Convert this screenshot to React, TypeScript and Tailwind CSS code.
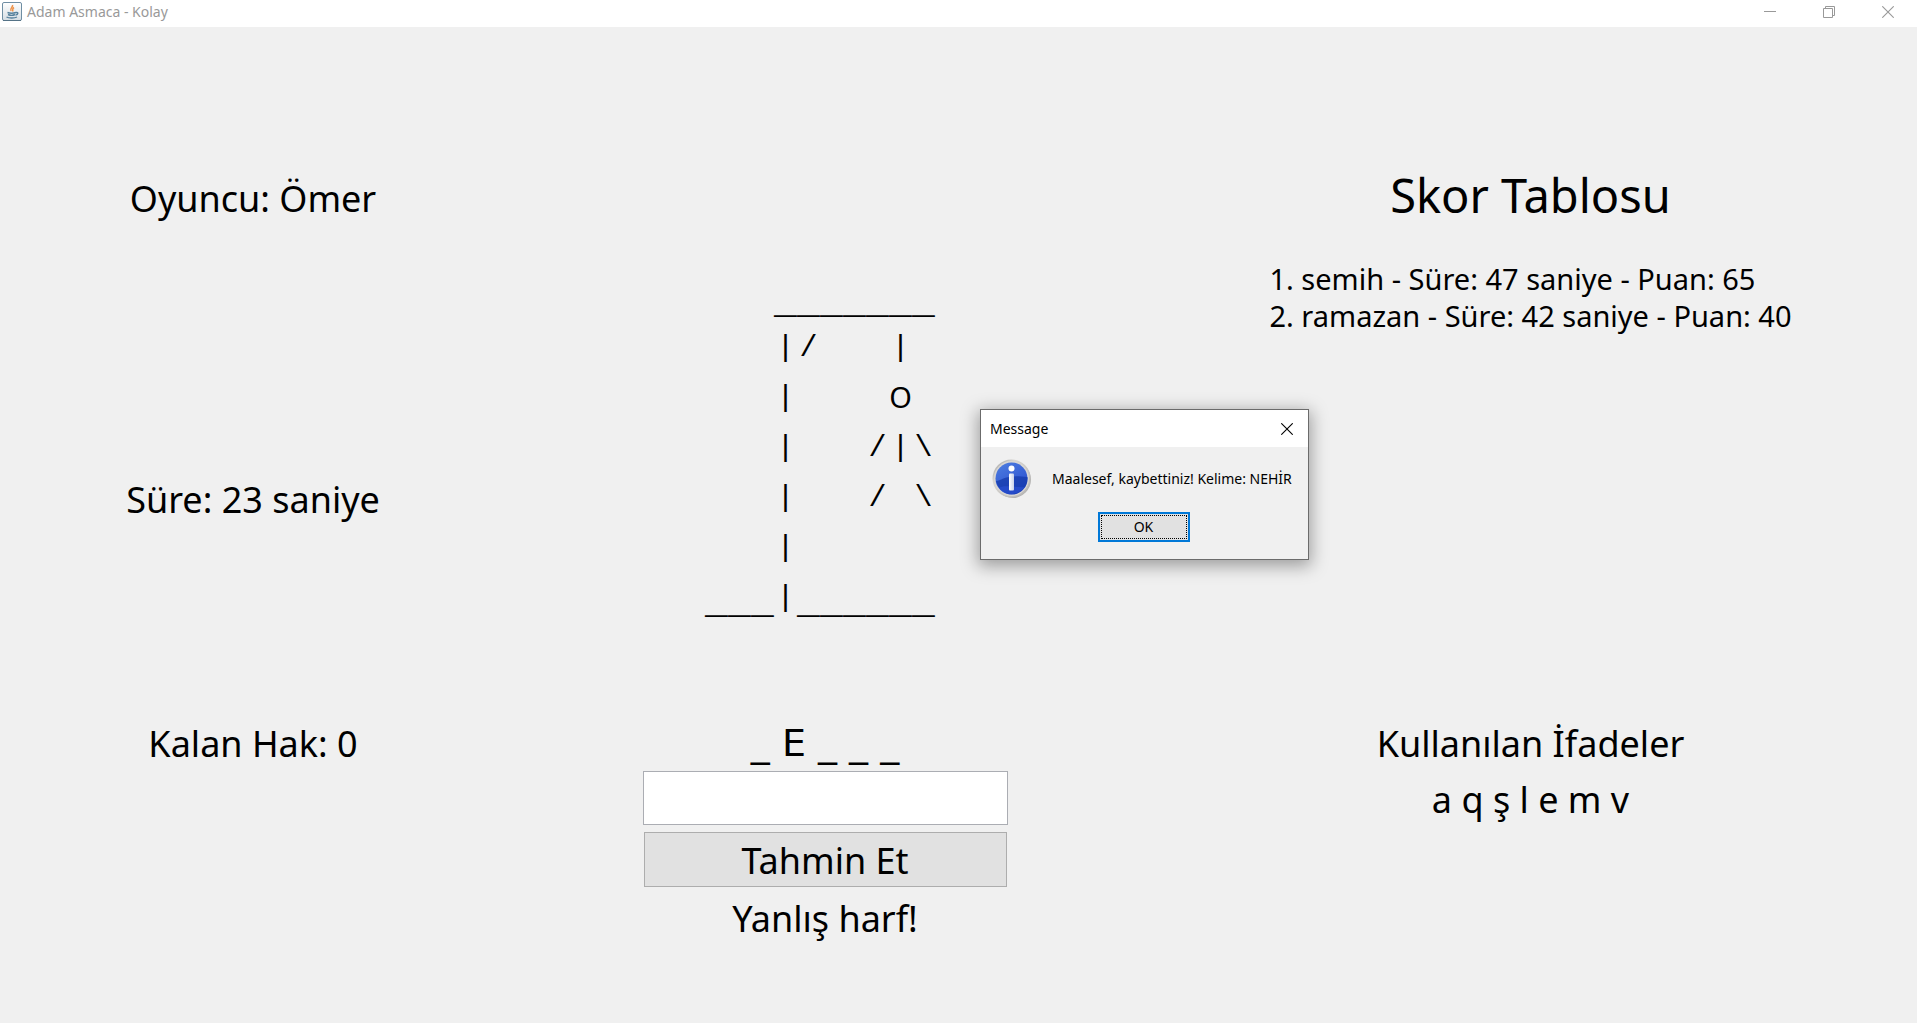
import { useState } from "react";

const gallows = [
  "   _______",
  "   |/   | ",
  "   |    O ",
  "   |   /|\\",
  "   |   / \\",
  "   |      ",
  "___|______",
];

const scores = [
  "1. semih - Süre: 47 saniye - Puan: 65",
  "2. ramazan - Süre: 42 saniye - Puan: 40",
];

function glyphClass(glyph: string) {
  if (glyph === "_") return "w-[23px] text-center text-[38px] leading-[62px]";
  if (glyph === "O") return "flex w-[23px] justify-center font-['Noto_Sans',sans-serif] text-[29px] leading-[50px]";
  return "w-[23px] text-center text-[30px] leading-[52px]";
}

function JavaIcon() {
  return (
    <svg width="20" height="20" viewBox="0 0 20 20" aria-hidden="true">
      <defs>
        <linearGradient id="cupTile" x1="0" y1="0" x2="0" y2="1">
          <stop offset="0" stopColor="#ffffff" />
          <stop offset="1" stopColor="#d5dde3" />
        </linearGradient>
      </defs>
      <rect x="0.5" y="0.5" width="19" height="18" rx="1.5" fill="url(#cupTile)" stroke="#6f8ea3" />
      <path d="M1 18.5h18" stroke="#557387" />
      <path d="M10.5 3c1 2-3 3-1.500 6M12 5.500c-2.500 1.500-.5 2-1.500 4" fill="none" stroke="#ee9147" strokeWidth="1.500" />
      <path d="M5.500 10.500c2 .8 6 .8 8.500 0M6 12.500c2 1 5 1 7 0M14 10.500c2.500-.4 2.500 2-.5 2.600M4.500 15c2.500 1.400 8 1.400 10.500 0" fill="none" stroke="#55809c" strokeWidth="1.400" />
    </svg>
  );
}

function CrossIcon() {
  return (
    <svg width="12" height="12" viewBox="0 0 12 12" aria-hidden="true">
      <path d="M0.300 0.300l11.400 11.400M11.700 0.300l-11.400 11.400" stroke="currentColor" strokeWidth="1.100" />
    </svg>
  );
}

function InfoIcon() {
  return (
    <svg width="40" height="40" viewBox="0 0 40 40" aria-hidden="true">
      <defs>
        <linearGradient id="infoRing" x1="0" y1="0" x2="1" y2="1">
          <stop offset="0" stopColor="#9a9a9a" />
          <stop offset="0.300" stopColor="#d8d6d2" />
          <stop offset="1" stopColor="#b5b3b0" />
        </linearGradient>
        <linearGradient id="infoFill" x1="0" y1="0" x2="0.600" y2="1">
          <stop offset="0" stopColor="#4f7fe0" />
          <stop offset="1" stopColor="#2a4fd0" />
        </linearGradient>
        <linearGradient id="infoStem" x1="0" y1="0" x2="1" y2="0">
          <stop offset="0" stopColor="#ffffff" />
          <stop offset="1" stopColor="#c9d2ea" />
        </linearGradient>
      </defs>
      <circle cx="20.500" cy="20.500" r="18.500" fill="#000" opacity="0.250" />
      <circle cx="19.500" cy="19.500" r="19" fill="url(#infoRing)" />
      <circle cx="19.500" cy="19.500" r="17.500" fill="#d9d7d4" />
      <circle cx="19.500" cy="19.500" r="16" fill="url(#infoFill)" />
      <path d="M4 22c7-1 10-7 31.500-4a16 16 0 0 1-10 16.500c-9 3-19-2-21.500-12.500z" fill="#1338a8" opacity="0.700" />
      <path d="M7 29c4-4 18 0 26-1-5 7-18 11-26 1z" fill="#2f55dd" opacity="0.500" />
      <circle cx="19.500" cy="9.500" r="3" fill="#fff" />
      <rect x="17" y="14.500" width="5" height="17" rx="1" fill="url(#infoStem)" />
    </svg>
  );
}

function Gallows() {
  return (
    <div className="flex flex-col pr-2.5 font-['Liberation_Mono',monospace]" role="img" aria-label="Adam asmaca">
      {gallows.map((row, r) => (
        <div key={r} className="flex h-[50px]">
          {row.split("").map((glyph, c) => (
            <span key={c} className={glyphClass(glyph)}>
              {glyph}
            </span>
          ))}
        </div>
      ))}
    </div>
  );
}

function MessageDialog({ onClose }: { onClose: () => void }) {
  return (
    <div
      role="dialog"
      aria-label="Message"
      className="absolute top-[409px] left-[980px] flex w-[329px] flex-col border border-[#6b6b6b] bg-[#f0f0f0] pb-[17px] text-sm leading-5 shadow-[0_4px_16px_2px_rgba(0,0,0,0.350)]"
    >
      <div className="flex h-[37px] items-center justify-between bg-white pr-[15px] pl-[9px]">
        <span>Message</span>
        <button type="button" aria-label="Close" onClick={onClose}>
          <CrossIcon />
        </button>
      </div>
      <div className="flex items-center gap-5 pt-3 pl-[11px]">
        <InfoIcon />
        <p className="whitespace-nowrap">Maalesef, kaybettiniz! Kelime: NEHİR</p>
      </div>
      <div className="flex justify-center pt-[13px] pr-0.5">
        <button
          type="button"
          onClick={onClose}
          className="h-[30px] w-[92px] border-2 border-[#0078d7] bg-[#e1e1e1] p-px"
        >
          <span className="flex h-full items-center justify-center border border-dotted border-black">OK</span>
        </button>
      </div>
    </div>
  );
}

export default function App() {
  const [open, setOpen] = useState(true);
  const [guess, setGuess] = useState("");

  return (
    <div className="relative flex min-h-screen flex-col bg-[#f0f0f0] font-['Noto_Sans',sans-serif] text-black">
      <header className="flex h-[27px] items-center justify-between bg-white pr-[23px] pl-0.5 text-[#999999]">
        <div className="flex items-center gap-[5px] pb-1 text-sm leading-5">
          <JavaIcon />
          <h1>Adam Asmaca - Kolay</h1>
        </div>
        <div className="flex items-center gap-[47px] pb-1">
          <button type="button" aria-label="Minimize">
            <svg width="12" height="12" viewBox="0 0 12 12" aria-hidden="true">
              <path d="M0 5.500h12" stroke="currentColor" />
            </svg>
          </button>
          <button type="button" aria-label="Restore">
            <svg width="12" height="12" viewBox="0 0 12 12" fill="none" aria-hidden="true">
              <path d="M0.500 2.500h9v9h-9zM2.500 2.500v-2h9v9h-2" stroke="currentColor" />
            </svg>
          </button>
          <button type="button" aria-label="Close window">
            <CrossIcon />
          </button>
        </div>
      </header>

      <main className="grid flex-1 grid-cols-[506fr_638fr_773fr] text-[36px] leading-[46px]">
        <section className="flex flex-col items-center pt-[149px]">
          <p>Oyuncu: Ömer</p>
          <p className="mt-[255px]">Süre: 23 saniye</p>
          <p className="mt-[198px]">Kalan Hak: 0</p>
        </section>

        <section className="flex flex-col items-center pt-[245px]">
          <Gallows />
          <form className="mt-[98px] flex w-[365px] flex-col items-center" onSubmit={(e) => e.preventDefault()}>
            <label htmlFor="guess" className="font-['DejaVu_Sans',sans-serif] text-[38px]">
              _ E _ _ _
            </label>
            <input
              id="guess"
              value={guess}
              onChange={(e) => setGuess(e.target.value)}
              className="mt-[5px] h-[54px] w-full border border-[#abadb3] bg-white px-2 outline-none"
            />
            <button type="submit" className="mt-[7px] h-[55px] w-[363px] border border-[#adadad] bg-[#e1e1e1] pt-0.5">
              Tahmin Et
            </button>
            <p className="mt-[9px]">Yanlış harf!</p>
          </form>
        </section>

        <section className="flex flex-col items-center pt-[139px]">
          <h2 className="text-[47px] leading-[58px]">Skor Tablosu</h2>
          <ol className="mt-9 text-[29px] leading-[37px] whitespace-nowrap">
            {scores.map((line) => (
              <li key={line}>{line}</li>
            ))}
          </ol>
          <h2 className="mt-[387px]">Kullanılan İfadeler</h2>
          <p className="mt-2.5">a q ş l e m v</p>
        </section>
      </main>

      {open && <MessageDialog onClose={() => setOpen(false)} />}
    </div>
  );
}
